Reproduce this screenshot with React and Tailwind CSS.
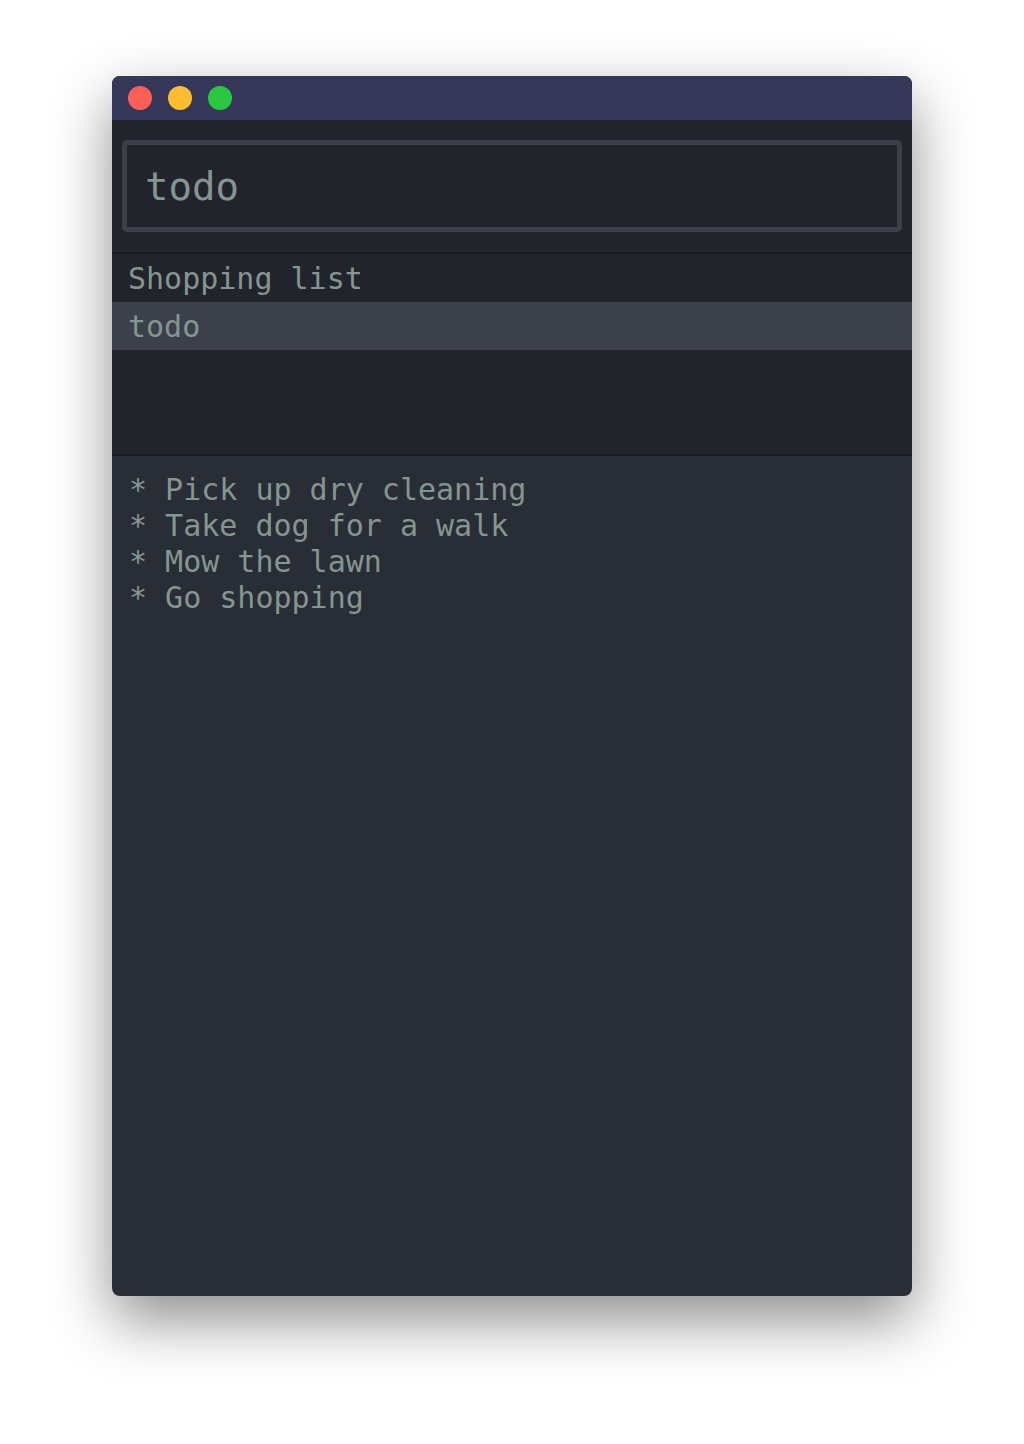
const ITEMS = ['Shopping list', 'todo'];
const NOTE = ['* Pick up dry cleaning', '* Take dog for a walk', '* Mow the lawn', '* Go shopping'];

export default function App() {
  const mono = { fontFamily: '"DejaVu Sans Mono", "Liberation Mono", monospace' };

  return (
    <div className="min-h-screen bg-white pt-[76px] pb-[148px]">
      <div
        className="mx-auto flex h-[1220px] w-[800px] flex-col overflow-hidden rounded-lg bg-[#292d35] shadow-[0_24px_60px_rgba(0,0,0,0.45)]"
        style={mono}
      >
        <div className="flex h-[44px] shrink-0 items-center gap-4 bg-[#343757] pl-4">
          <span className="h-6 w-6 rounded-full bg-[#fe5f57]" />
          <span className="h-6 w-6 rounded-full bg-[#febc2e]" />
          <span className="h-6 w-6 rounded-full bg-[#29c840]" />
        </div>

        <div className="bg-[#21242b] px-[10px] pt-5 pb-5">
          <div className="flex h-[92px] items-center rounded-[5px] border-[5px] border-[#3c404b] px-[18px]">
            <span className="text-[39px] leading-none text-[#849690]">todo</span>
          </div>
        </div>

        <div className="h-[2px] bg-[#191b20]" />

        <div className="h-[200px] bg-[#21242b]">
          {ITEMS.map((item, i) => (
            <div
              key={item}
              className={
                'flex h-12 items-center px-[16px] text-[30px] text-[#849690] ' +
                (i === 1 ? 'bg-[#3c404b]' : '')
              }
            >
              {item}
            </div>
          ))}
        </div>

        <div className="h-[2px] bg-[#191b20]" />

        <div className="flex-1 px-[17px] pt-4">
          {NOTE.map((line) => (
            <div key={line} className="h-9 whitespace-pre text-[30px] leading-9 text-[#849690]">
              {line}
            </div>
          ))}
        </div>
      </div>
    </div>
  );
}
